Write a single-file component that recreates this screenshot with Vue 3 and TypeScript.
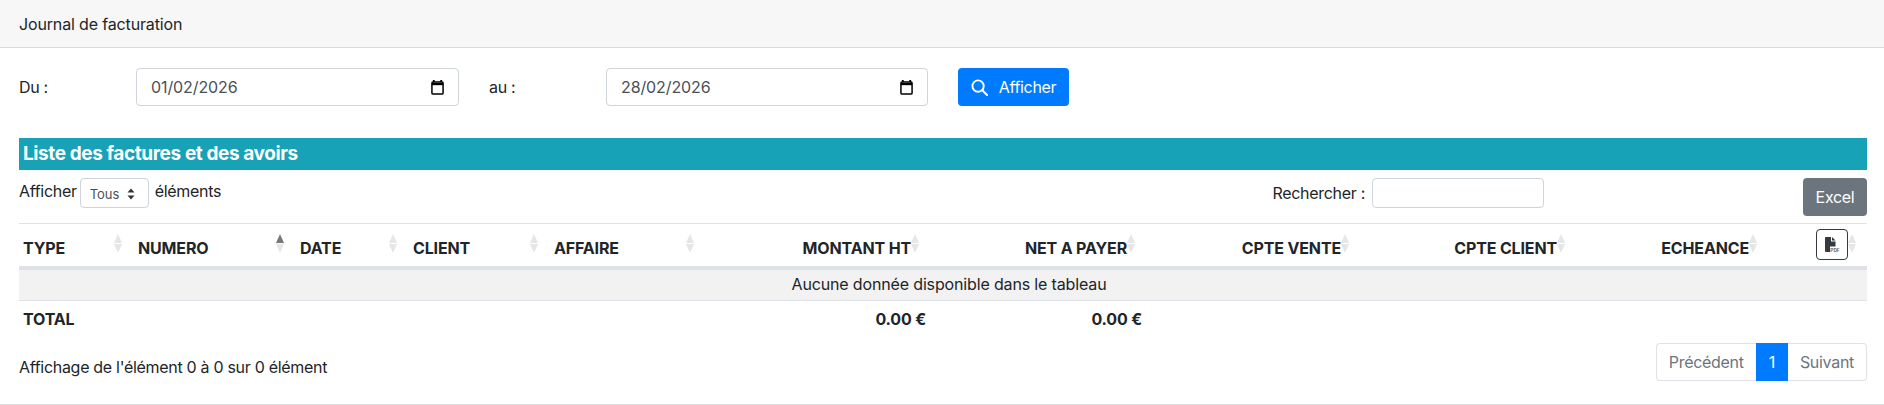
<script setup lang="ts">
interface Col { label: string; width: number; right?: boolean; active?: boolean }
const cols: Col[] = [
  { label: 'TYPE', width: 115 },
  { label: 'NUMERO', width: 162, active: true },
  { label: 'DATE', width: 113 },
  { label: 'CLIENT', width: 141 },
  { label: 'AFFAIRE', width: 156 },
  { label: 'MONTANT HT', width: 224, right: true },
  { label: 'NET A PAYER', width: 216, right: true },
  { label: 'CPTE VENTE', width: 214, right: true },
  { label: 'CPTE CLIENT', width: 216, right: true },
  { label: 'ECHEANCE', width: 192, right: true },
  { label: '', width: 99, right: true }
]
</script>

<template>
  <div class="card">
    <div class="card-header">Journal de facturation</div>
    <div class="card-body">
      <div class="filters">
        <span class="flabel">Du :</span>
        <div class="date"><span>01/02/2026</span><svg class="cal" viewBox="0 0 14 16"><path d="M3 0v2M11 0v2" stroke="#000" stroke-width="2"/><rect x="1" y="2" width="12" height="13" rx="1.2" fill="#fff" stroke="#000" stroke-width="1.6"/><path d="M1 3h12v2.5H1z" fill="#000"/></svg></div>
        <span class="flabel au">au :</span>
        <div class="date second"><span>28/02/2026</span><svg class="cal" viewBox="0 0 14 16"><path d="M3 0v2M11 0v2" stroke="#000" stroke-width="2"/><rect x="1" y="2" width="12" height="13" rx="1.2" fill="#fff" stroke="#000" stroke-width="1.6"/><path d="M1 3h12v2.5H1z" fill="#000"/></svg></div>
        <button class="btn-primary">
          <svg class="search" viewBox="0 0 18 18"><circle cx="7.5" cy="7.5" r="6" fill="none" stroke="#fff" stroke-width="2"/><path d="M12 12l5 5" stroke="#fff" stroke-width="2.2" stroke-linecap="round"/></svg>
          Afficher
        </button>
      </div>

      <div class="band">Liste des factures et des avoirs</div>

      <div class="toolbar">
        <div class="length">
          <span>Afficher</span>
          <div class="select"><span>Tous</span><svg viewBox="0 0 8 12" class="updown"><path d="M4 0.5L7.5 4.5H0.5zM4 11.5L0.5 7.5H7.5z" fill="#333"/></svg></div>
          <span>éléments</span>
        </div>
        <div class="search-box">
          <span>Rechercher :</span>
          <div class="search-input"></div>
        </div>
        <button class="btn-excel">Excel</button>
      </div>

      <table class="grid">
        <colgroup><col v-for="c in cols" :key="c.label" :style="{ width: c.width + 'px' }" /></colgroup>
        <thead>
          <tr>
            <th v-for="c in cols" :key="c.label" :class="{ right: c.right, tool: !c.label }">
              <template v-if="c.label">{{ c.label }}</template>
              <button v-else class="pdf">
                <svg viewBox="0 0 15 15" class="pdf-ico"><path d="M0 1a1 1 0 011-1h5v4.5h4.5V14a1 1 0 01-1 1H1a1 1 0 01-1-1z" fill="#343a40"/><path d="M7 0l3.5 3.5H7z" fill="#343a40"/><rect x="5" y="9.5" width="10" height="5.5" fill="#fff"/><text x="5.3" y="14.6" font-size="4.8" font-weight="700" font-family="Inter, sans-serif" fill="#666">PDF</text></svg>
              </button>
              <span class="sort" :class="{ active: c.active }"><i class="up"></i><i class="down"></i></span>
            </th>
          </tr>
        </thead>
        <tbody>
          <tr class="empty"><td :colspan="cols.length">Aucune donnée disponible dans le tableau</td></tr>
        </tbody>
        <tfoot>
          <tr>
            <td>TOTAL</td><td></td><td></td><td></td><td></td>
            <td class="right">0.00 €</td><td class="right">0.00 €</td>
            <td></td><td></td><td></td><td></td>
          </tr>
        </tfoot>
      </table>

      <div class="foot">
        <div class="info">Affichage de l'élément 0 à 0 sur 0 élément</div>
        <div class="pager">
          <span class="page first">Précédent</span>
          <span class="page current">1</span>
          <span class="page last">Suivant</span>
        </div>
      </div>
    </div>
  </div>
</template>

<style>
html, body { margin: 0; background: #fff; }
</style>

<style scoped>
.card {
  height: 405px;
  box-sizing: border-box;
  border-bottom: 1px solid #dfdfdf;
  font-family: Inter, "Liberation Sans", sans-serif;
  font-size: 16px;
  letter-spacing: -0.3px;
  color: #212529;
  background: #fff;
}
.card-header {
  height: 47px;
  box-sizing: content-box;
  background: #f7f7f7;
  border-bottom: 1px solid #dcdcdc;
  padding-left: 19px;
  font-size: 16px;
  letter-spacing: -0.15px;
  line-height: 48px;
}
.card-body { padding: 20px 17px 0 19px; }
.filters { display: flex; align-items: center; height: 38px; }
.flabel { width: 117px; }
.au { margin-left: 30px; }
.date {
  width: 323px;
  height: 38px;
  box-sizing: border-box;
  border: 1px solid #ced4da;
  border-radius: 4px;
  padding: 0 14px;
  display: flex;
  align-items: center;
  justify-content: space-between;
  letter-spacing: -0.1px;
  color: #495057;
}
.date.second { width: 322px; }
.cal { width: 13px; height: 15px; }
.btn-primary {
  margin-left: 30px;
  width: 111px;
  height: 38px;
  border: 0;
  border-radius: 4px;
  background: #007bff;
  color: #fff;
  font: inherit;
  letter-spacing: -0.3px;
  display: flex;
  align-items: center;
  justify-content: center;
  gap: 11px;
}
.search { width: 17px; height: 17px; }
.band {
  margin-top: 32px;
  height: 32px;
  background: #17a2b8;
  color: #fff;
  font-size: 19px;
  font-weight: 700;
  letter-spacing: -0.4px;
  line-height: 32px;
  padding-left: 4px;
}
.toolbar { display: flex; align-items: flex-start; margin-top: 8px; height: 38px; }
.length { display: flex; align-items: center; gap: 3px; flex: 1; height: 26px; }
.select {
  width: 69px;
  height: 30px;
  flex: none;
  box-sizing: border-box;
  border: 1px solid #ced4da;
  border-radius: 4px;
  display: flex;
  align-items: center;
  justify-content: space-between;
  padding: 2px 13px 0 9px;
  margin: 4px 3px 0 0;
  font-size: 13px;
  letter-spacing: 0;
  color: #495057;
}
.updown { width: 8px; height: 12px; }
.search-box { display: flex; align-items: center; gap: 7px; height: 30px; margin-right: 259px; }
.search-input {
  width: 172px;
  height: 30px;
  box-sizing: border-box;
  border: 1px solid #ced4da;
  border-radius: 4px;
}
.btn-excel {
  width: 64px;
  height: 38px;
  border: 0;
  border-radius: 4px;
  background: #6c757d;
  color: #fff;
  font: inherit;
  letter-spacing: -0.3px;
}
.grid {
  margin-top: 7px;
  width: 1848px;
  table-layout: fixed;
  border-collapse: collapse;
  border-top: 1px solid #dee2e6;
}
.grid th {
  position: relative;
  height: 44px;
  padding: 7px 4px 0;
  box-sizing: border-box;
  text-align: left;
  font-weight: 700;
  letter-spacing: -0.15px;
  border-bottom: 4px solid #dee2e6;
  vertical-align: middle;
}
.grid th.right { text-align: right; padding-right: 19px; }
.grid th.tool { padding-top: 0; }
.sort {
  position: absolute;
  right: 12px;
  top: 10px;
  width: 8px;
  display: flex;
  flex-direction: column;
  gap: 1px;
}
.grid th.right .sort { right: 11px; }
.sort i { display: block; width: 0; height: 0; border-left: 4px solid transparent; border-right: 4px solid transparent; }
.sort .up { border-bottom: 9px solid #e6e6e6; }
.sort .down { border-top: 9px solid #e6e6e6; }
.sort.active .up { border-bottom-color: #777; }
.pdf {
  width: 32px;
  height: 31px;
  padding: 0;
  background: #fff;
  border: 1px solid #343a40;
  border-radius: 4px;
  display: inline-flex;
  align-items: center;
  justify-content: center;
  vertical-align: middle;
}
.pdf-ico { width: 15px; height: 15px; }
.empty td {
  height: 33px;
  box-sizing: border-box;
  padding: 0 0 2px 12px;
  background: #f2f2f2;
  text-align: center;
  letter-spacing: -0.15px;
  border-bottom: 1px solid #dee2e6;
}
tfoot td {
  height: 35px;
  padding: 0 4px;
  font-weight: 700;
  letter-spacing: -0.15px;
}
tfoot td.right { text-align: right; }
.foot { display: flex; justify-content: space-between; align-items: flex-start; margin-top: 7px; }
.info { padding-top: 14px; }
.pager { display: flex; height: 38px; }
.page {
  box-sizing: border-box;
  display: flex;
  align-items: center;
  padding: 0 12px;
  border: 1px solid #dee2e6;
  color: #6c757d;
}
.first { border-radius: 4px 0 0 4px; border-right: 0; }
.current { background: #007bff; border-color: #007bff; color: #fff; }
.last { border-radius: 0 4px 4px 0; border-left: 0; }
</style>
